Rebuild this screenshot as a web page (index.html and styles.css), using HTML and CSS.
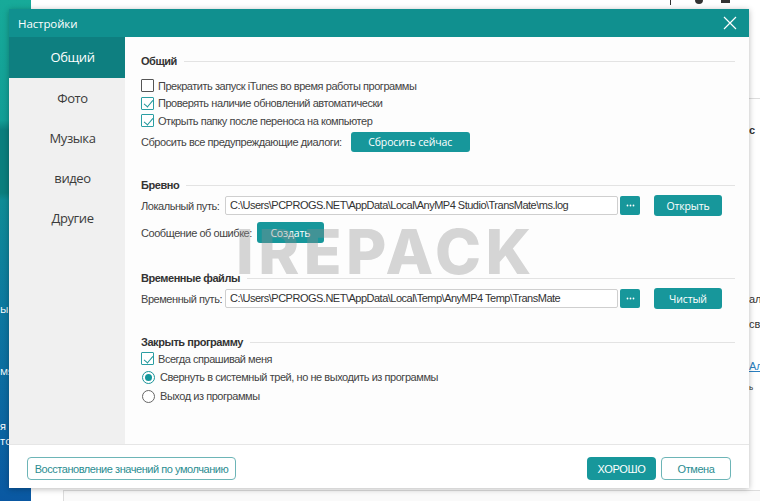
FILE: index.html
```
<!DOCTYPE html>
<html lang="ru">
<head>
<meta charset="utf-8">
<title>Настройки</title>
<link rel="stylesheet" href="styles.css">
</head>
<body>
<div class="app">
  <div class="app-side">
    <span class="frag f1">ы</span>
    <span class="frag f2">мя</span>
    <span class="frag f3">я</span>
    <span class="frag f4">тс</span>
  </div>
  <div class="app-main">
    <div class="app-top">
      <span class="ti ti1"></span>
      <span class="ti ti2"></span>
      <span class="ti ti3"></span>
    </div>
    <div class="app-mid">
      <div class="app-fill"></div>
      <div class="app-right">
        <div class="r-line"></div>
        <div class="r-t r1">с</div>
        <div class="r-t r2">алы</div>
        <div class="r-t r3">сво</div>
        <div class="r-t r4">Ал</div>
        <div class="r-t r5">ь</div>
      </div>
    </div>
    <div class="app-bottom"></div>
  </div>

  <div class="dialog">
    <div class="titlebar">
      <span class="title">Настройки</span>
      <svg class="close" width="14" height="14" viewBox="0 0 14 14"><path d="M1 1L13 13M13 1L1 13" stroke="#fff" stroke-width="1.2" fill="none"/></svg>
    </div>
    <div class="main">
      <nav class="sidebar">
        <div class="nav-item active">Общий</div>
        <div class="nav-item">Фото</div>
        <div class="nav-item">Музыка</div>
        <div class="nav-item">видео</div>
        <div class="nav-item">Другие</div>
      </nav>
      <div class="content">
        <section class="sec sec-general">
          <div class="sec-head"><span>Общий</span></div>
          <div class="check-row first"><span class="cb"></span>Прекратить запуск iTunes во время работы программы</div>
          <div class="check-row"><span class="cb on"></span>Проверять наличие обновлений автоматически</div>
          <div class="check-row"><span class="cb on"></span>Открыть папку после переноса на компьютер</div>
          <div class="row reset-row"><span class="lbl">Сбросить все предупреждающие диалоги:</span><button class="btn btn-fill btn-reset">Сбросить сейчас</button></div>
        </section>
        <section class="sec sec-log">
          <div class="sec-head"><span>Бревно</span></div>
          <div class="row path-row"><span class="lbl lbl-path">Локальный путь:</span><div class="path">C:\Users\PCPROGS.NET\AppData\Local\AnyMP4 Studio\TransMate\ms.log</div><button class="btn btn-fill btn-dots"><svg width="9" height="3" viewBox="0 0 9 3"><circle cx="1.5" cy="1.5" r="0.9" fill="#fff"/><circle cx="4.5" cy="1.5" r="0.9" fill="#fff"/><circle cx="7.5" cy="1.5" r="0.9" fill="#fff"/></svg></button><button class="btn btn-fill btn-side">Открыть</button></div>
          <div class="row err-row"><span class="lbl">Сообщение об ошибке:</span><button class="btn btn-fill btn-create">Создать</button></div>
        </section>
        <section class="sec sec-temp">
          <div class="sec-head"><span>Временные файлы</span></div>
          <div class="row path-row"><span class="lbl lbl-path">Временный путь:</span><div class="path">C:\Users\PCPROGS.NET\AppData\Local\Temp\AnyMP4 Temp\TransMate</div><button class="btn btn-fill btn-dots"><svg width="9" height="3" viewBox="0 0 9 3"><circle cx="1.5" cy="1.5" r="0.9" fill="#fff"/><circle cx="4.5" cy="1.5" r="0.9" fill="#fff"/><circle cx="7.5" cy="1.5" r="0.9" fill="#fff"/></svg></button><button class="btn btn-fill btn-side">Чистый</button></div>
        </section>
        <section class="sec sec-close">
          <div class="sec-head"><span>Закрыть программу</span></div>
          <div class="check-row"><span class="cb on"></span>Всегда спрашивай меня</div>
          <div class="radio-row"><span class="rb on"></span>Свернуть в системный трей, но не выходить из программы</div>
          <div class="radio-row"><span class="rb"></span>Выход из программы</div>
        </section>
      </div>
    </div>
    <div class="footer">
      <button class="btn btn-outline btn-restore">Восстановление значений по умолчанию</button>
      <div class="footer-right">
        <button class="btn btn-fill btn-ok">ХОРОШО</button>
        <button class="btn btn-outline btn-cancel">Отмена</button>
      </div>
    </div>
    <div class="watermark">IREPACK</div>
  </div>
</div>
</body>
</html>
```
FILE: styles.css
```
* { box-sizing: border-box; }
html, body { margin: 0; padding: 0; }
body {
  width: 760px;
  height: 501px;
  overflow: hidden;
  background: #fff;
  font-family: "Liberation Sans", Arial, sans-serif;
  font-size: 11px;
  letter-spacing: -0.45px;
  color: #444;
}
.app {
  position: relative;
  display: flex;
  width: 760px;
  height: 501px;
}
.app-side {
  width: 31px;
  flex: none;
  display: flex;
  flex-direction: column;
  color: #fff;
  font-family: "Open Sans", sans-serif;
  font-size: 11px;
  line-height: 13px;
  letter-spacing: 0;
  background: linear-gradient(180deg, #17aa99 0%, #129e96 24%, #0b7e7d 26%, #0b7e7d 38.5%, #0f8c96 40%, #0d78a0 62%, #0a58a2 100%);
}
.frag { display: block; }
.f1 { margin-top: 302px; }
.f2 { margin-top: 49px; }
.f3 { margin-top: 42px; }
.f4 { margin-top: 2px; }
.app-main {
  flex: 1;
  display: flex;
  flex-direction: column;
}
.app-top {
  height: 9px;
  display: flex;
  justify-content: flex-end;
  align-items: flex-start;
  padding-right: 30px;
}
.ti { display: block; background: #333; }
.ti1 { width: 1px; height: 5px; margin-right: 24px; }
.ti2 { width: 8px; height: 4px; border-radius: 0 0 4px 4px; margin-right: 18px; }
.ti3 { width: 9px; height: 3px; }
.app-mid {
  flex: 1;
  display: flex;
}
.app-fill { flex: 1; }
.app-right {
  width: 11px;
  overflow: hidden;
  white-space: nowrap;
  color: #333;
  font-size: 11px;
  line-height: 14px;
  letter-spacing: 0;
}
.r-line { height: 1px; background: #ddd; margin-top: 89px; }
.r1 { margin-top: 24px; font-weight: bold; }
.r2 { margin-top: 155px; }
.r3 { margin-top: 11px; }
.r4 { margin-top: 28px; color: #2a7fc0; text-decoration: underline; }
.r5 { margin-top: 8px; font-size: 8px; }
.app-bottom {
  height: 11px;
  margin-left: 32px;
  border-top: 1px solid #dcdcdc;
  border-left: 1px solid #dcdcdc;
  background: #fafafa;
}

/* dialog */
.dialog {
  position: absolute;
  left: 9px;
  top: 9px;
  width: 740px;
  height: 479px;
  background: #fff;
  display: flex;
  flex-direction: column;
  box-shadow: 0 1px 6px rgba(0,0,0,0.28);
}
.titlebar {
  height: 28px;
  flex: none;
  background: #10908f;
  display: flex;
  align-items: center;
  justify-content: space-between;
  padding: 0 12px 0 9px;
}
.title {
  font-family: "Open Sans", sans-serif;
  font-size: 11.5px;
  letter-spacing: -0.1px;
  color: #fff;
}
.close { display: block; }
.main {
  flex: 1;
  display: flex;
  min-height: 0;
}
.sidebar {
  width: 116px;
  flex: none;
  background: #f0f0f0;
  padding-top: 1px;
}
.nav-item {
  height: 40px;
  line-height: 40px;
  text-align: center;
  padding-left: 11px;
  font-family: "Open Sans", sans-serif;
  font-size: 13px;
  letter-spacing: -0.4px;
  color: #3b3b3b;
}
.nav-item.active {
  background: #0e7f80;
  color: #fff;
  margin-top: -1px;
  height: 41px;
}
.content {
  flex: 1;
  background: #fdfdfd;
  padding: 16px 14px 0 16px;
}
.sec-head {
  display: flex;
  align-items: center;
  height: 16px;
  font-weight: bold;
  color: #333;
  white-space: nowrap;
}
.sec-head::after {
  content: "";
  flex: 1;
  height: 1px;
  background: #e3e3e3;
  margin-left: 7px;
}
.check-row, .radio-row {
  display: flex;
  align-items: center;
  height: 17.5px;
  color: #444;
  white-space: nowrap;
}
.check-row.first { margin-top: 8px; }
.radio-row { height: 19px; }
.cb {
  position: relative;
  width: 13px;
  height: 13px;
  border: 1px solid #555;
  border-radius: 1px;
  background: #fff;
  margin-right: 4px;
  flex: none;
}
.cb.on { border-color: #2a9ea3; }
.cb.on::after {
  content: "";
  position: absolute;
  left: 3.5px;
  top: 0.5px;
  width: 4px;
  height: 8px;
  border-right: 1.5px solid #1d959a;
  border-bottom: 1.5px solid #1d959a;
  transform: rotate(40deg);
}
.rb {
  position: relative;
  width: 13px;
  height: 13px;
  border: 1px solid #666;
  border-radius: 50%;
  background: #fff;
  margin: 0 5px 0 1px;
  flex: none;
}
.rb.on { border-color: #1a9499; }
.rb.on::after {
  content: "";
  position: absolute;
  left: 2px;
  top: 2px;
  width: 7px;
  height: 7px;
  border-radius: 50%;
  background: #14979b;
}
.row {
  display: flex;
  align-items: center;
  white-space: nowrap;
}
.reset-row { margin-top: 2.5px; height: 20px; }
.reset-row .lbl { margin-right: 9px; }
.btn {
  font-family: "Open Sans", sans-serif;
  font-size: 10.5px;
  letter-spacing: -0.15px;
  border-radius: 3px;
  padding: 0;
  white-space: nowrap;
  cursor: pointer;
}
.btn-fill {
  background: #17979b;
  border: none;
  color: #fff;
}
.btn-reset { width: 119px; height: 20px; }
.sec-log { margin-top: 25px; }
.path-row { height: 21px; margin-top: 2px; margin-right: 13px; }
.lbl-path { width: 84px; flex: none; }
.path {
  flex: 1;
  height: 19px;
  line-height: 17px;
  border: 1px solid #cfcfcf;
  border-radius: 2px;
  background: #fff;
  padding-left: 4px;
  color: #333;
  font-size: 11px;
  letter-spacing: -0.5px;
  white-space: nowrap;
  overflow: hidden;
}
.btn-dots {
  width: 20px;
  height: 19px;
  margin-left: 2px;
  border-radius: 2px;
  display: flex;
  align-items: center;
  justify-content: center;
}
.btn-dots svg { display: block; }
.btn-side {
  width: 68px;
  height: 21px;
  margin-left: 14px;
}
.err-row { margin-top: 6px; height: 21px; }
.err-row .lbl { margin-right: 5px; }
.btn-create { width: 67px; height: 21px; }
.sec-temp { margin-top: 27px; }
.sec-close { margin-top: 25px; }

.footer {
  height: 44px;
  flex: none;
  border-top: 1px solid #e6e6e6;
  background: #fff;
  display: flex;
  justify-content: space-between;
  align-items: flex-start;
  padding: 12px 18px 0 18px;
}
.footer-right { display: flex; gap: 5px; }
.btn-outline {
  background: #fff;
  border: 1px solid #6db5b7;
  color: #2b8d91;
  font-family: "Liberation Sans", Arial, sans-serif;
  font-size: 11px;
  letter-spacing: -0.45px;
}
.btn-restore { width: 209px; height: 23px; border-radius: 4px; }
.btn-ok {
  width: 69px;
  height: 23px;
  border-radius: 4px;
  font-family: "Liberation Sans", Arial, sans-serif;
  font-size: 11px;
  letter-spacing: -0.3px;
}
.btn-cancel { width: 70px; height: 23px; border-radius: 4px; }

.watermark {
  position: absolute;
  left: 227px;
  top: 212px;
  font-family: "Inter", "Open Sans", sans-serif;
  font-weight: 800;
  font-size: 62px;
  line-height: 62px;
  letter-spacing: 4.5px;
  color: rgba(140,140,140,0.36);
  pointer-events: none;
}
```
